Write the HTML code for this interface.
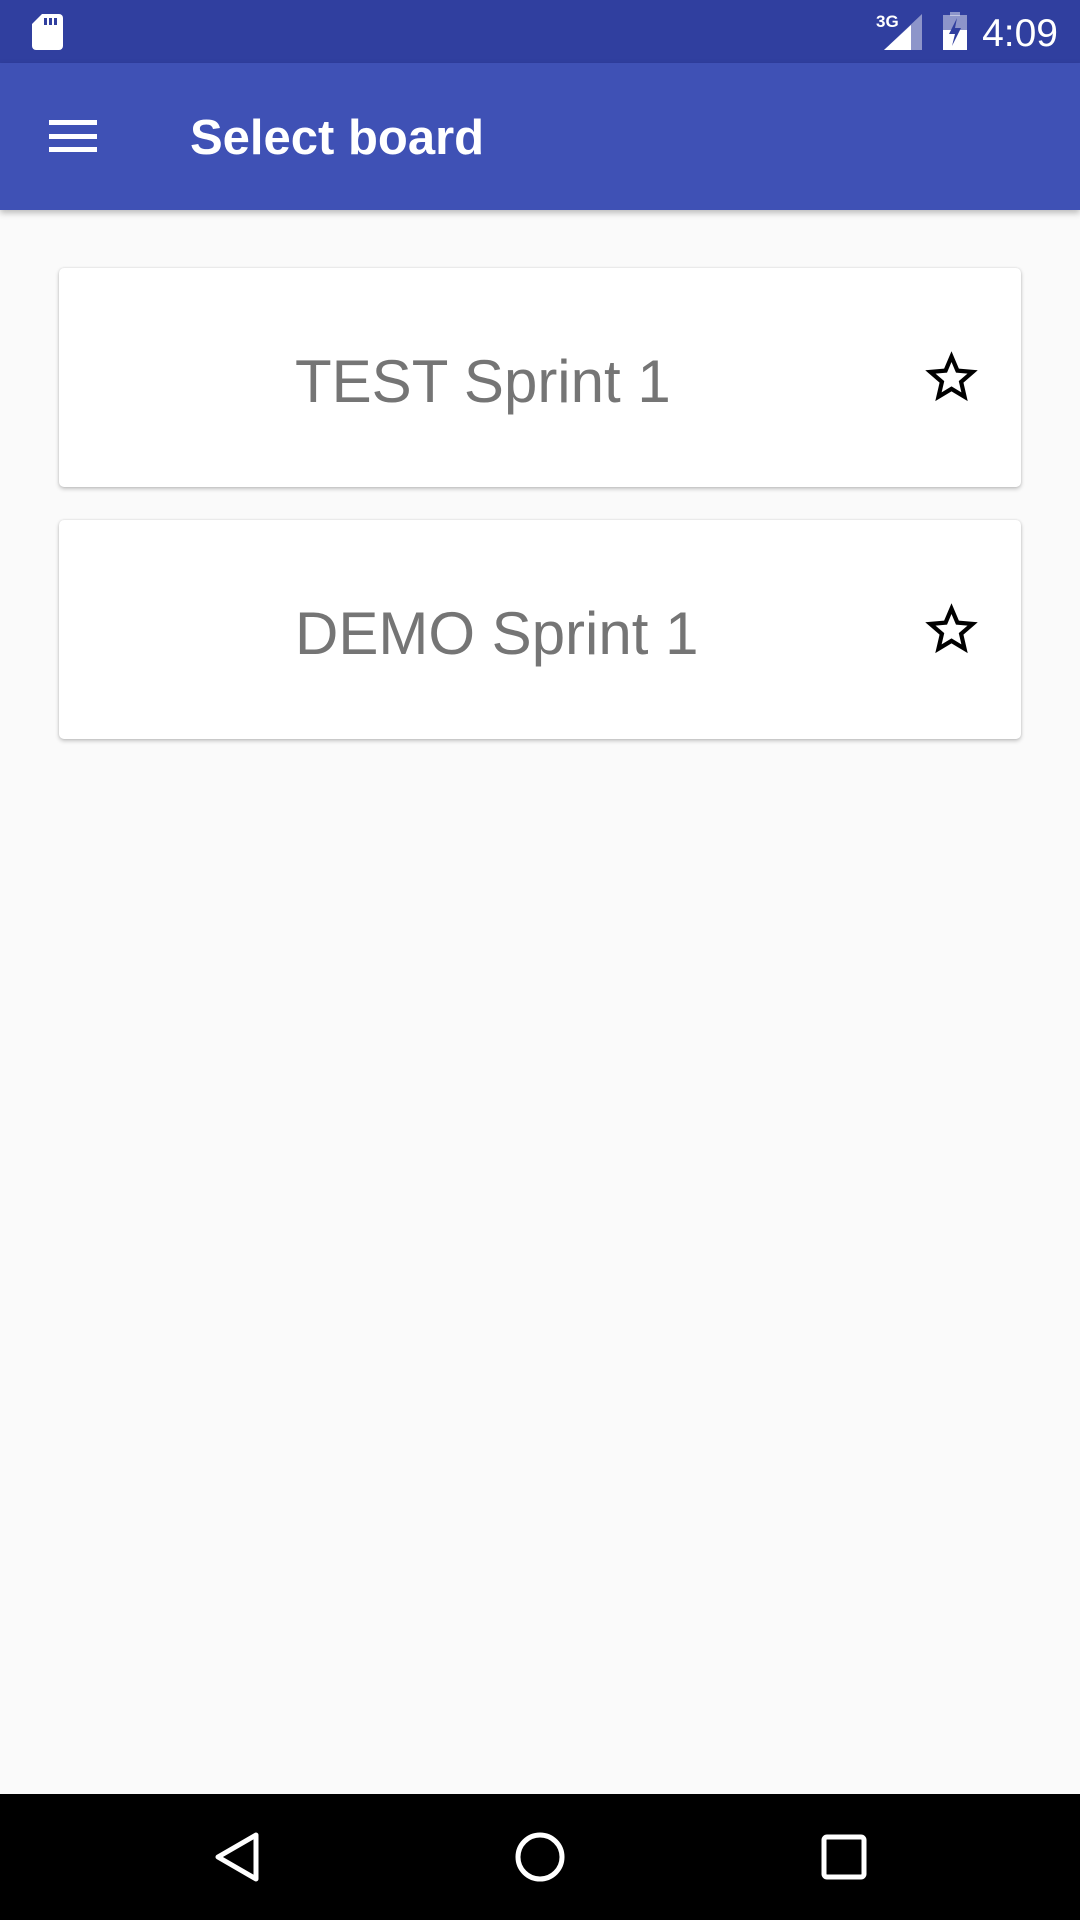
<!DOCTYPE html>
<html><head><meta charset="utf-8"><style>
*{margin:0;padding:0;box-sizing:border-box}
body{width:1080px;height:1920px;background:#fafafa;font-family:"Liberation Sans",sans-serif;position:relative;overflow:hidden}
.status{position:absolute;left:0;top:0;width:1080px;height:63px;background:#303f9f}
.toolbar{position:absolute;left:0;top:63px;width:1080px;height:147px;background:#3f51b5;box-shadow:0 3px 6px rgba(0,0,0,.25)}
.title{position:absolute;left:190px;top:45px;color:#fff;font-size:49px;font-weight:bold;line-height:60px}
.ham{position:absolute;left:49px;top:57px;width:48px;height:32px}
.ham i{position:absolute;left:0;width:48px;height:5px;background:#fff}
.card{position:absolute;left:59px;width:962px;height:219px;background:#fff;border-radius:5px;box-shadow:0 2px 4px rgba(0,0,0,.22),0 0 2px rgba(0,0,0,.12)}
.card span{position:absolute;left:236px;top:78px;font-size:60px;line-height:72px;color:#757575}
.card svg{position:absolute;left:861px;top:78px}
.nav{position:absolute;left:0;top:1794px;width:1080px;height:126px;background:#000}
.time{position:absolute;right:22px;top:12px;color:#fff;font-size:39px;line-height:44px}
</style></head><body>
<div class="status">
<svg style="position:absolute;left:32px;top:14px" width="31" height="36" viewBox="0 0 31 36"><path d="M10 0H27a4 4 0 0 1 4 4V32a4 4 0 0 1-4 4H4a4 4 0 0 1-4-4V10Z" fill="#fff"/><rect x="12" y="4" width="3" height="7" fill="#303f9f"/><rect x="17" y="4" width="3" height="7" fill="#303f9f"/><rect x="22" y="4" width="3" height="7" fill="#303f9f"/></svg>
<div style="position:absolute;left:876px;top:12px;color:#fff;font-size:17px;font-weight:bold">3G</div>
<svg style="position:absolute;left:884px;top:14px" width="38" height="36" viewBox="0 0 38 36"><path d="M38 0V36H0Z" fill="rgba(255,255,255,.45)"/><path d="M27 11V36H0Z" fill="#fff"/></svg>
<svg style="position:absolute;left:943px;top:12px" width="24" height="38" viewBox="0 0 24 38"><rect x="7" y="0" width="10" height="4" fill="rgba(255,255,255,.45)"/><rect x="0" y="3" width="24" height="35" fill="rgba(255,255,255,.45)"/><rect x="0" y="18" width="24" height="20" fill="#fff"/><path d="M14 6L6 22H12L9 34L18 16H12Z" fill="#303f9f"/></svg>
<div class="time">4:09</div>
</div>
<div class="toolbar">
<div class="ham"><i style="top:0"></i><i style="top:14px"></i><i style="top:27px"></i></div>
<div class="title">Select board</div>
</div>
<div class="card" style="top:268px"><span>TEST Sprint 1</span>
<svg width="63" height="63" viewBox="0 0 24 24"><path d="M22 9.24l-7.19-.62L12 2 9.19 8.63 2 9.24l5.46 4.73L5.82 21 12 17.27 18.18 21l-1.63-7.03L22 9.24zM12 15.4l-3.76 2.27 1-4.28-3.32-2.88 4.38-.38L12 6.1l1.710 4.04 4.38.38-3.32 2.88 1 4.28L12 15.4z"/></svg></div>
<div class="card" style="top:520px"><span>DEMO Sprint 1</span>
<svg width="63" height="63" viewBox="0 0 24 24"><path d="M22 9.24l-7.19-.62L12 2 9.19 8.63 2 9.24l5.46 4.73L5.82 21 12 17.27 18.18 21l-1.63-7.03L22 9.24zM12 15.4l-3.76 2.27 1-4.28-3.32-2.88 4.38-.38L12 6.1l1.71 4.04 4.38.38-3.32 2.88 1 4.28L12 15.4z"/></svg></div>
<div class="nav">
<svg style="position:absolute;left:212px;top:37px" width="50" height="52" viewBox="0 0 50 52"><path d="M44 4V48L6 26Z" fill="none" stroke="#fff" stroke-width="5" stroke-linejoin="round"/></svg>
<svg style="position:absolute;left:514px;top:37px" width="52" height="52" viewBox="0 0 52 52"><circle cx="26" cy="26" r="22" fill="none" stroke="#fff" stroke-width="5"/></svg>
<svg style="position:absolute;left:821px;top:40px" width="46" height="46" viewBox="0 0 46 46"><rect x="3" y="3" width="40" height="40" rx="3" fill="none" stroke="#fff" stroke-width="5"/></svg>
</div>
</body></html>
